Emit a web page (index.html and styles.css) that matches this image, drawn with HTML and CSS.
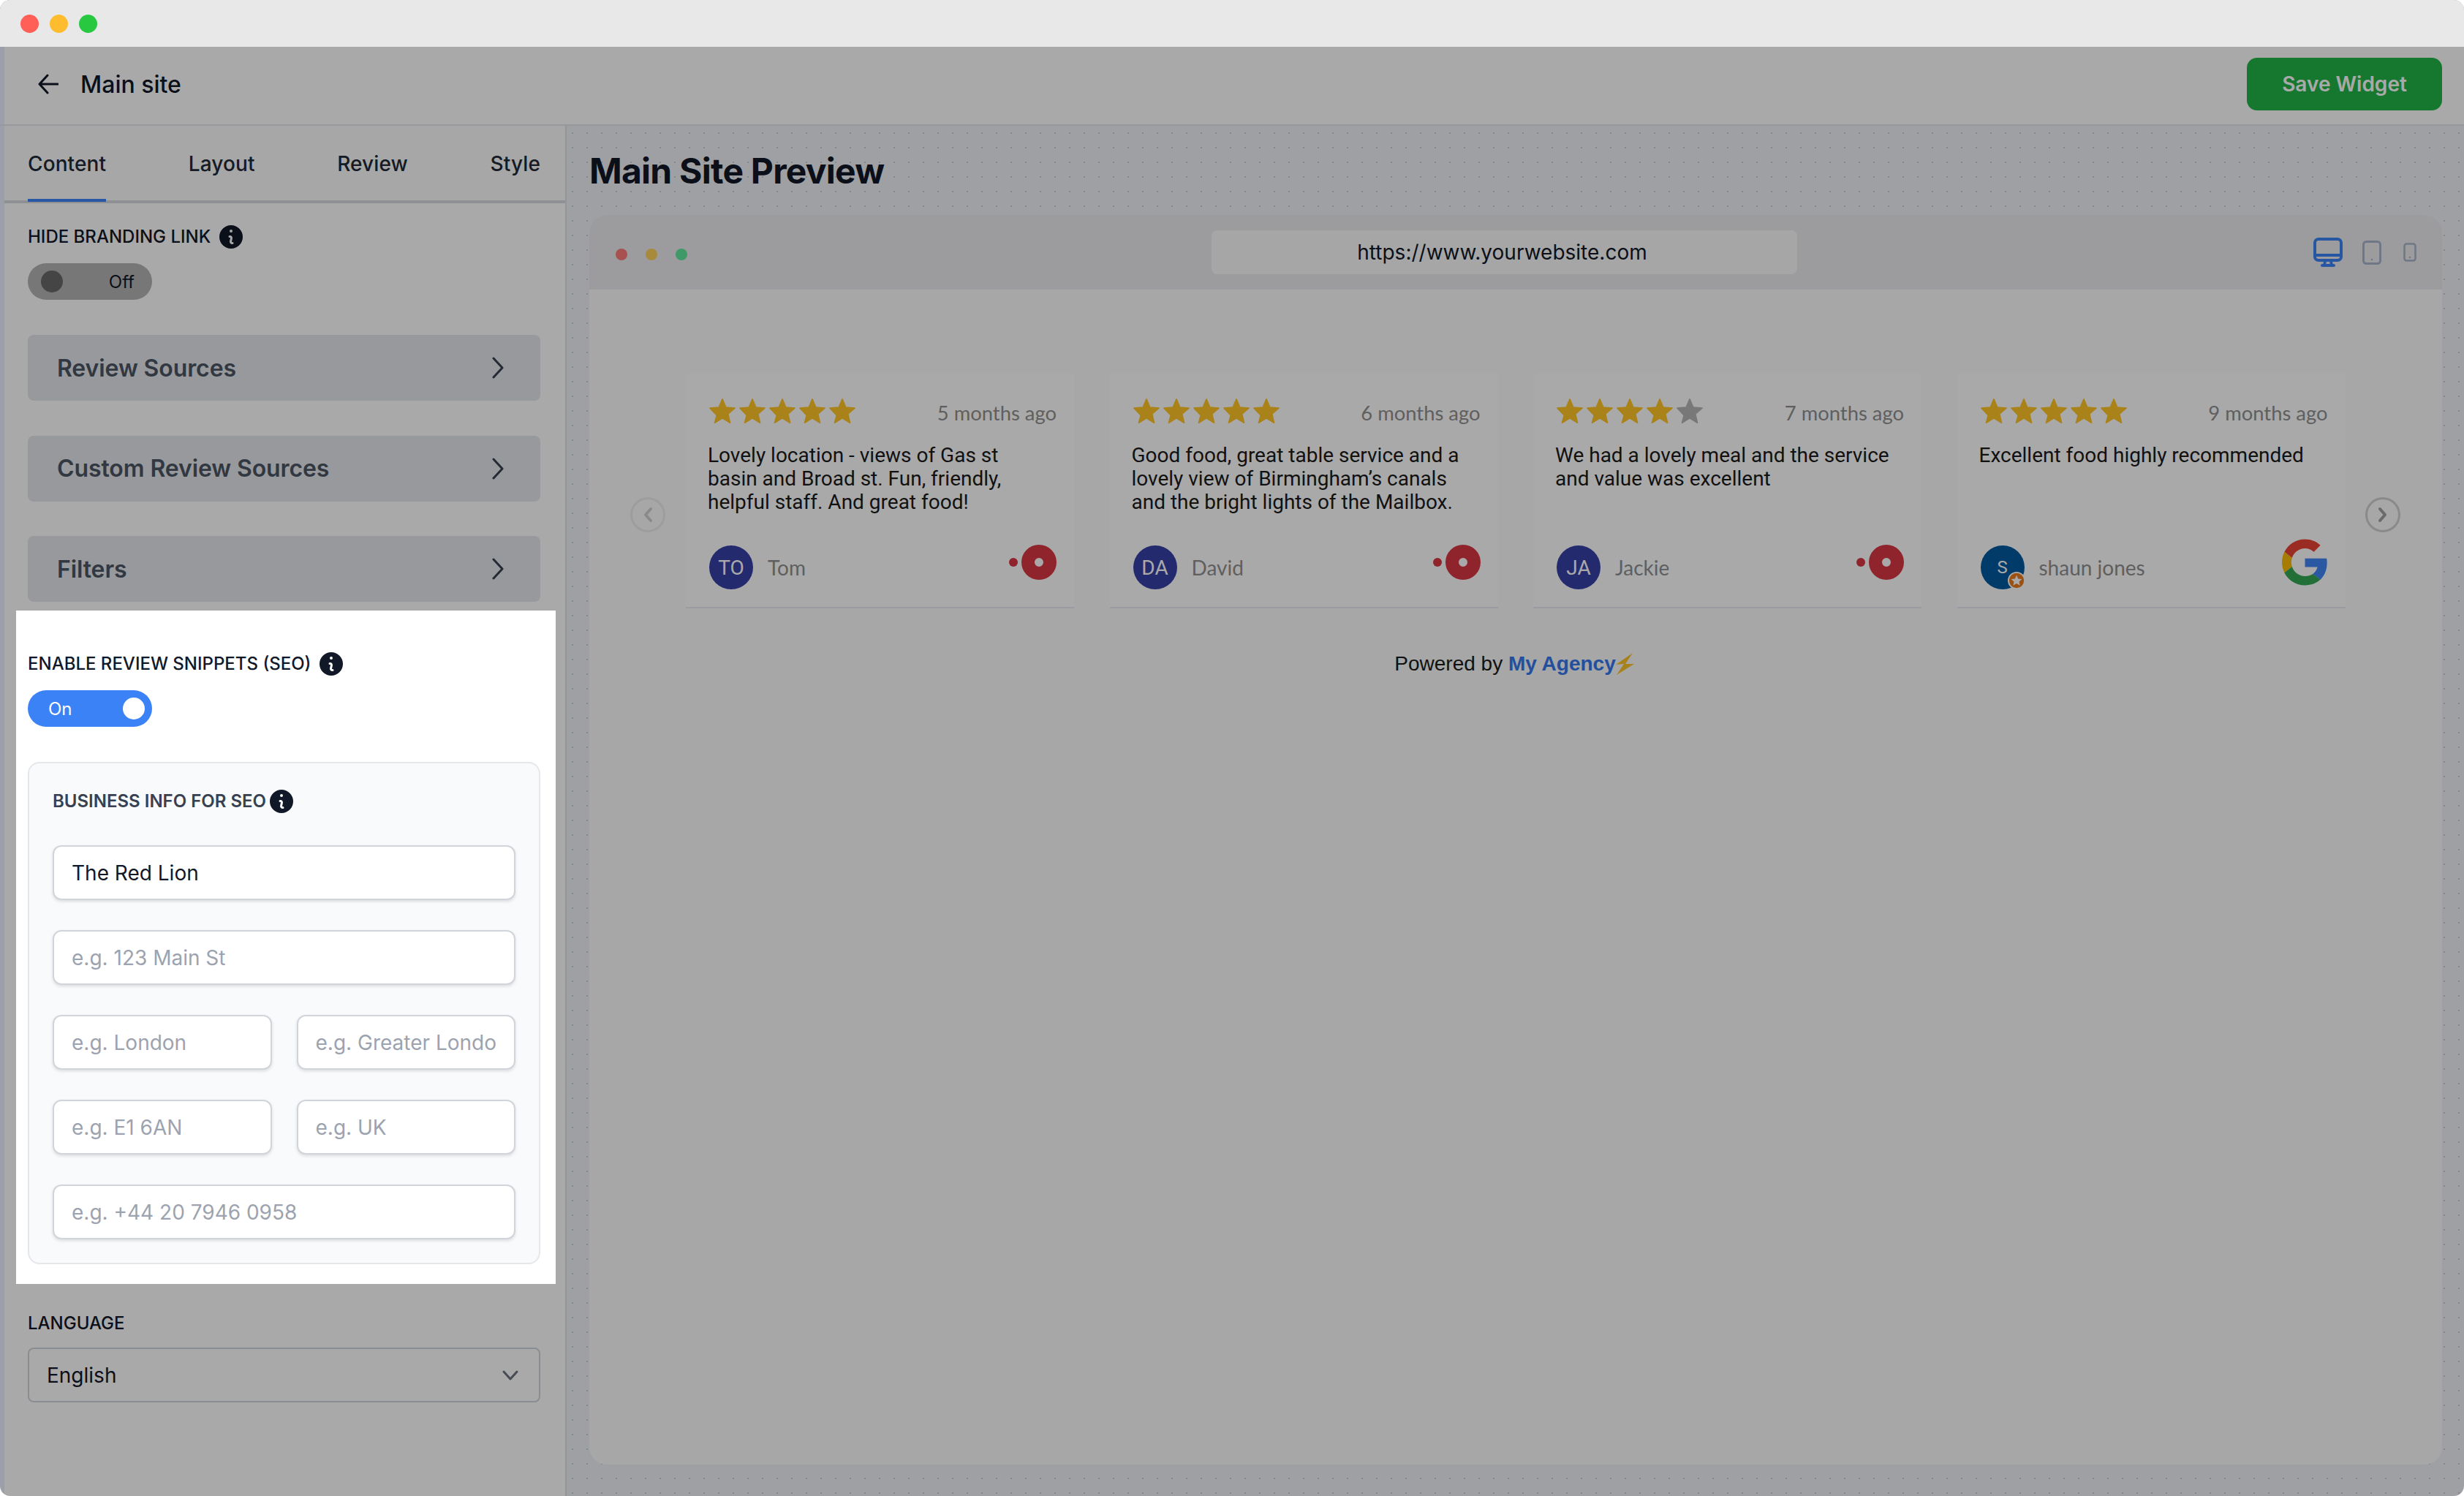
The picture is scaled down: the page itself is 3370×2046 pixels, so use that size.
FILE: index.html
```html
<!DOCTYPE html>
<html lang="en">
<head>
    <meta charset="UTF-8">
    <meta name="viewport" content="width=device-width, initial-scale=1.0">
    <title>Main site</title>
    <link rel="stylesheet" href="styles.css">
</head>
<body>
    <svg class="defs" width="0" height="0">
        <symbol id="star" viewBox="1.5 1.5 21 20"><path d="M12 17.27L18.18 21l-1.64-7.03L22 9.24l-7.19-.61L12 2 9.19 8.63 2 9.24l5.46 5.73L5.82 21z" fill="currentColor" stroke="currentColor" stroke-width="1" stroke-linejoin="round"/></symbol>
        <symbol id="info" viewBox="2 2 16 16"><path fill="currentColor" fill-rule="evenodd" d="M18 10a8 8 0 11-16 0 8 8 0 0116 0zm-7-4a1 1 0 11-2 0 1 1 0 012 0zM9 9a.75.75 0 000 1.5h.253a.25.25 0 01.244.304l-.459 2.066A1.75 1.75 0 0010.747 15H11a.75.75 0 000-1.5h-.253a.25.25 0 01-.244-.304l.459-2.066A1.75 1.75 0 009.253 9H9z"/></symbol>
        <symbol id="opentable" viewBox="0 0 65 48"><circle cx="6" cy="24" r="6" fill="currentColor"/><path fill="currentColor" fill-rule="evenodd" d="M41 0a24 24 0 110 48 24 24 0 010-48zm0 18a6 6 0 100 12 6 6 0 000-12z"/></symbol>
    </svg>

    <div class="window">
        <div class="titlebar">
            <span class="light red"></span>
            <span class="light yellow"></span>
            <span class="light green"></span>
        </div>

        <header class="topbar">
            <svg class="back" width="28" height="28" viewBox="0 0 28 28" fill="none" stroke="currentColor" stroke-width="3" stroke-linecap="round" stroke-linejoin="round"><path d="M13 2L2 14l11 12M2 14h25"/></svg>
            <span class="site-name">Main site</span>
            <button class="save">Save Widget</button>
        </header>

        <div class="workspace">
            <aside class="sidebar">
                <nav class="tabs">
                    <span class="tab active">Content</span>
                    <span class="tab">Layout</span>
                    <span class="tab">Review</span>
                    <span class="tab">Style</span>
                </nav>

                <div class="sidebar-body">
                    <div class="label-row">
                        <span class="label">Hide branding link</span>
                        <svg class="info"><use href="#info"/></svg>
                    </div>
                    <div class="toggle off"><span class="knob"></span><span>Off</span></div>

                    <div class="accordion first">
                        <span>Review Sources</span>
                        <svg width="20" height="30" viewBox="0 0 20 30" fill="none" stroke="currentColor" stroke-width="3" stroke-linecap="round" stroke-linejoin="round"><path d="M4 2l12 13L4 28"/></svg>
                    </div>
                    <div class="accordion">
                        <span>Custom Review Sources</span>
                        <svg width="20" height="30" viewBox="0 0 20 30" fill="none" stroke="currentColor" stroke-width="3" stroke-linecap="round" stroke-linejoin="round"><path d="M4 2l12 13L4 28"/></svg>
                    </div>
                    <div class="accordion">
                        <span>Filters</span>
                        <svg width="20" height="30" viewBox="0 0 20 30" fill="none" stroke="currentColor" stroke-width="3" stroke-linecap="round" stroke-linejoin="round"><path d="M4 2l12 13L4 28"/></svg>
                    </div>

                    <section class="spotlight">
                        <div class="label-row">
                            <span class="label">Enable review snippets (SEO)</span>
                            <svg class="info"><use href="#info"/></svg>
                        </div>
                        <div class="toggle on"><span>On</span><span class="knob"></span></div>

                        <div class="seo-panel">
                            <div class="label-row tight">
                                <span class="label strong">Business info for SEO</span>
                                <svg class="info"><use href="#info"/></svg>
                            </div>
                            <div class="fields">
                                <input class="field wide" type="text" value="The Red Lion">
                                <input class="field wide" type="text" placeholder="e.g. 123 Main St">
                                <input class="field" type="text" placeholder="e.g. London">
                                <input class="field" type="text" placeholder="e.g. Greater London">
                                <input class="field" type="text" placeholder="e.g. E1 6AN">
                                <input class="field" type="text" placeholder="e.g. UK">
                                <input class="field wide" type="text" placeholder="e.g. +44 20 7946 0958">
                            </div>
                        </div>
                    </section>

                    <div class="label language-label">Language</div>
                    <div class="select">
                        <span>English</span>
                        <svg width="22" height="14" viewBox="0 0 22 14" fill="none" stroke="currentColor" stroke-width="3" stroke-linecap="round" stroke-linejoin="round"><path d="M2 2l9 10 9-10"/></svg>
                    </div>
                </div>
            </aside>

            <main class="preview">
                <h1>Main Site Preview</h1>
                <div class="frame">
                    <div class="frame-bar">
                        <div class="frame-dots">
                            <span class="dot red"></span>
                            <span class="dot yellow"></span>
                            <span class="dot green"></span>
                        </div>
                        <div class="url">https://www.yourwebsite.com</div>
                        <div class="devices">
                            <svg class="desktop" width="40" height="40" viewBox="0 0 40 40" fill="none" stroke="currentColor" stroke-width="4" stroke-linejoin="round" stroke-linecap="round"><rect x="2" y="2" width="36" height="29" rx="5"/><path d="M2 24h36M16 32l-1 6M24 32l1 6M12 38h16"/></svg>
                            <svg class="tablet" width="26" height="33" viewBox="0 0 26 33" fill="none" stroke="currentColor" stroke-width="3"><rect x="1.5" y="1.5" width="23" height="30" rx="4"/><circle cx="13" cy="26" r="1.2" fill="currentColor" stroke="none"/></svg>
                            <svg class="phone" width="18" height="26" viewBox="0 0 18 26" fill="none" stroke="currentColor" stroke-width="2.5"><rect x="1.5" y="1.5" width="15" height="23" rx="3"/><circle cx="9" cy="20" r="1.2" fill="currentColor" stroke="none"/></svg>
                        </div>
                    </div>

                    <div class="frame-body">
                        <div class="carousel">
                            <button class="nav prev"><svg width="14" height="22" viewBox="0 0 14 22" fill="none" stroke="currentColor" stroke-width="4" stroke-linecap="round" stroke-linejoin="round"><path d="M11 3l-7 8 7 8"/></svg></button>

                            <article class="card">
                                <div class="card-top">
                                    <div class="stars">
                                        <svg class="star"><use href="#star"/></svg><svg class="star"><use href="#star"/></svg><svg class="star"><use href="#star"/></svg><svg class="star"><use href="#star"/></svg><svg class="star"><use href="#star"/></svg>
                                    </div>
                                    <span class="time">5 months ago</span>
                                </div>
                                <p class="review">Lovely location - views of Gas st basin and Broad st. Fun, friendly, helpful staff. And great food!</p>
                                <div class="card-foot">
                                    <span class="avatar">TO</span>
                                    <span class="author">Tom</span>
                                    <svg class="ot-logo"><use href="#opentable"/></svg>
                                </div>
                            </article>

                            <article class="card">
                                <div class="card-top">
                                    <div class="stars">
                                        <svg class="star"><use href="#star"/></svg><svg class="star"><use href="#star"/></svg><svg class="star"><use href="#star"/></svg><svg class="star"><use href="#star"/></svg><svg class="star"><use href="#star"/></svg>
                                    </div>
                                    <span class="time">6 months ago</span>
                                </div>
                                <p class="review">Good food, great table service and a lovely view of Birmingham’s canals and the bright lights of the Mailbox.</p>
                                <div class="card-foot">
                                    <span class="avatar">DA</span>
                                    <span class="author">David</span>
                                    <svg class="ot-logo"><use href="#opentable"/></svg>
                                </div>
                            </article>

                            <article class="card">
                                <div class="card-top">
                                    <div class="stars">
                                        <svg class="star"><use href="#star"/></svg><svg class="star"><use href="#star"/></svg><svg class="star"><use href="#star"/></svg><svg class="star"><use href="#star"/></svg><svg class="star empty"><use href="#star"/></svg>
                                    </div>
                                    <span class="time">7 months ago</span>
                                </div>
                                <p class="review">We had a lovely meal and the service and value was excellent</p>
                                <div class="card-foot">
                                    <span class="avatar">JA</span>
                                    <span class="author">Jackie</span>
                                    <svg class="ot-logo"><use href="#opentable"/></svg>
                                </div>
                            </article>

                            <article class="card">
                                <div class="card-top">
                                    <div class="stars">
                                        <svg class="star"><use href="#star"/></svg><svg class="star"><use href="#star"/></svg><svg class="star"><use href="#star"/></svg><svg class="star"><use href="#star"/></svg><svg class="star"><use href="#star"/></svg>
                                    </div>
                                    <span class="time">9 months ago</span>
                                </div>
                                <p class="review">Excellent food highly recommended</p>
                                <div class="card-foot">
                                    <span class="avatar guide">S
                                        <svg class="guide-badge" width="24" height="24" viewBox="0 0 26 26"><circle cx="13" cy="13" r="12" fill="#e87a1d" stroke="#fff" stroke-width="2"/><path fill="#fff" d="M13 5l2.3 5.2 5.7.6-4.2 3.8 1.2 5.600-5-2.900-5 2.900 1.200-5.600L5 10.800l5.700-.6z"/></svg>
                                    </span>
                                    <span class="author">shaun jones</span>
                                    <svg class="g-logo" viewBox="0 0 48 48">
                                        <path fill="#EA4335" d="M24 9.5c3.54 0 6.71 1.22 9.21 3.6l6.85-6.85C35.9 2.38 30.47 0 24 0 14.62 0 6.51 5.38 2.56 13.22l7.98 6.19C12.43 13.72 17.74 9.5 24 9.5z"/>
                                        <path fill="#4285F4" d="M46.98 24.55c0-1.57-.15-3.09-.38-4.55H24v9.02h12.94c-.58 2.96-2.26 5.48-4.78 7.18l7.73 6c4.51-4.18 7.09-10.36 7.09-17.65z"/>
                                        <path fill="#FBBC05" d="M10.53 28.59c-.48-1.45-.76-2.99-.76-4.59s.27-3.14.76-4.59l-7.98-6.19C.92 16.46 0 20.12 0 24c0 3.88.92 7.54 2.56 10.78l7.97-6.19z"/>
                                        <path fill="#34A853" d="M24 48c6.48 0 11.93-2.13 15.89-5.81l-7.73-6c-2.15 1.45-4.92 2.3-8.16 2.3-6.26 0-11.57-4.22-13.47-9.91l-7.98 6.19C6.51 42.62 14.62 48 24 48z"/>
                                    </svg>
                                </div>
                            </article>

                            <button class="nav next"><svg width="14" height="22" viewBox="0 0 14 22" fill="none" stroke="currentColor" stroke-width="4" stroke-linecap="round" stroke-linejoin="round"><path d="M3 3l7 8-7 8"/></svg></button>
                        </div>

                        <div class="powered">Powered by <a>My Agency</a><svg width="25" height="30" viewBox="0 0 25 30"><path fill="#fcc32a" d="M23 0L0 16l11-1L1 30l24-15-12 0z"/></svg></div>
                    </div>
                </div>
            </main>
        </div>
    </div>
</body>
</html>
```

FILE: styles.css
```css
* {
    box-sizing: border-box;
}
html, body {
    margin: 0;
    height: 100%;
    background: #fff;
}
body {
    font-family: Inter, "Noto Sans", sans-serif;
    color: #111827;
}
.defs {
    position: absolute;
}

.window {
    height: 2046px;
    display: flex;
    flex-direction: column;
    overflow: hidden;
    border-radius: 14px;
}

/* mac title bar sits above the dim layer */
.titlebar {
    position: relative;
    z-index: 20;
    height: 64px;
    flex: none;
    display: flex;
    align-items: center;
    gap: 15px;
    padding: 0 28px;
    background: #e8e8e8;
}
.light {
    width: 25px;
    height: 25px;
    border-radius: 50%;
}
.light.red { background: #ff5f57; }
.light.yellow { background: #febc2e; }
.light.green { background: #28c840; }

.topbar {
    height: 108px;
    flex: none;
    display: flex;
    align-items: center;
    padding: 0 30px 4px 52px;
    background: #fff;
    border-bottom: 2px solid #e5e7eb;
    box-shadow: inset 6px 0 0 #e8f0ff;
}
.back {
    margin-right: 30px;
    color: #111827;
}
.site-name {
    font-size: 32px;
    font-weight: 500;
}
.save {
    margin-left: auto;
    width: 267px;
    height: 72px;
    border: none;
    border-radius: 14px;
    background: #20b546;
    color: #fff;
    font-family: Inter, sans-serif;
    font-size: 28px;
    font-weight: 600;
}

.workspace {
    flex: 1;
    display: flex;
    min-height: 0;
}

/* sidebar */
.sidebar {
    width: 775px;
    flex: none;
    background: #fff;
    border-left: 6px solid #e8f0ff;
    border-right: 2px solid #dfe1e7;
}
.tabs {
    height: 106px;
    display: flex;
    justify-content: space-between;
    padding: 0 34px 0 32px;
    background: #fafcfb;
    border-bottom: 4px solid #d8dade;
}
.tab {
    height: 104px;
    padding-top: 4px;
    line-height: 96px;
    font-size: 28px;
    font-weight: 500;
    letter-spacing: 0.1px;
    color: #1f2937;
    border-bottom: 4px solid transparent;
}
.tab.active {
    border-bottom-color: #3b82f6;
}
.sidebar-body {
    padding: 30px 34px 0 32px;
}
.label-row {
    display: flex;
    align-items: center;
    gap: 12px;
    height: 32px;
}
.label-row.tight {
    gap: 5px;
}
.label {
    font-size: 24px;
    font-weight: 500;
    line-height: 30px;
    text-transform: uppercase;
    color: #111827;
}
.label.strong {
    color: #374151;
    font-weight: 600;
}
.info {
    width: 32px;
    height: 32px;
    color: #111827;
}

.toggle {
    width: 170px;
    height: 50px;
    margin-top: 20px;
    display: flex;
    align-items: center;
    justify-content: space-between;
    border-radius: 25px;
    font-size: 24px;
}
.knob {
    width: 30px;
    height: 30px;
    border-radius: 50%;
}
.toggle.off {
    padding: 0 24px 0 18px;
    background: #b4b4b4;
}
.toggle.off .knob {
    background: #686868;
}
.toggle.on {
    padding: 0 10px 0 28px;
    background: #3b82f6;
    color: #fff;
}
.toggle.on .knob {
    background: #fff;
}

.accordion {
    height: 90px;
    margin-bottom: 47.5px;
    display: flex;
    align-items: center;
    justify-content: space-between;
    padding: 0 48px 0 40px;
    background: #e5e7eb;
    border-radius: 8px;
    font-size: 32px;
    font-weight: 600;
    letter-spacing: -0.1px;
    color: #4b5563;
}
.accordion svg {
    color: #374151;
}
.accordion.first {
    margin-top: 48px;
}

/* highlighted block, the shadow dims everything else */
.spotlight {
    position: relative;
    z-index: 10;
    margin: -35.5px -21px 0 -16px;
    padding: 57px 21px 27px 16px;
    background: #fff;
    box-shadow: 0 0 0 4000px rgba(0, 0, 0, 0.337);
}
.seo-panel {
    margin-top: 48px;
    padding: 36px 32px 32px;
    background: #f9fafb;
    border: 2px solid #e5e7eb;
    border-radius: 16px;
}
.fields {
    margin-top: 44px;
    display: grid;
    grid-template-columns: 1fr 1fr;
    gap: 41px 34px;
}
.field {
    width: 100%;
    height: 75px;
    padding: 0 24px;
    background: #fff;
    border: 2px solid #d1d5db;
    border-radius: 12px;
    box-shadow: 0 2px 4px rgba(0, 0, 0, 0.12);
    font-family: Inter, sans-serif;
    font-size: 28px;
    color: #111827;
}
.field::placeholder {
    color: #9ca3af;
    opacity: 1;
}
.field.wide {
    grid-column: 1 / 3;
}

.language-label {
    margin-top: 39px;
}
.select {
    height: 75px;
    margin-top: 18px;
    display: flex;
    align-items: center;
    justify-content: space-between;
    padding: 0 28px 0 24px;
    border: 2px solid #d1d5db;
    border-radius: 8px;
    font-size: 28px;
}
.select svg {
    color: #6b7280;
}

/* preview */
.preview {
    flex: 1;
    display: flex;
    flex-direction: column;
    min-width: 0;
    padding: 32px 30px 43px 31px;
    background-color: #f0f2f8;
    background-image: radial-gradient(circle, #cbcfd6 1px, transparent 1.2px);
    background-size: 20px 20px;
    background-position: -2px 0;
}
.preview h1 {
    margin: 0 0 30px;
    font-size: 48px;
    line-height: 60px;
    font-weight: 700;
    letter-spacing: -0.75px;
}
.frame {
    flex: 1;
    display: flex;
    flex-direction: column;
    border-radius: 24px;
    overflow: hidden;
    background: #fafcfb;
}
.frame-bar {
    height: 102px;
    flex: none;
    display: flex;
    align-items: center;
    padding: 0 35px 0 36px;
    background: #ebecf0;
}
.frame-dots {
    display: flex;
    gap: 25px;
    padding-top: 6px;
}
.dot {
    width: 16px;
    height: 16px;
    border-radius: 50%;
}
.dot.red { background: #fc7a7a; }
.dot.yellow { background: #fcd058; }
.dot.green { background: #5fe89d; }
.url {
    width: 801px;
    height: 60px;
    margin-left: 717px;
    padding-right: 6px;
    background: #fafbfb;
    border-radius: 8px;
    text-align: center;
    line-height: 60px;
    font-size: 28px;
}
.devices {
    margin-left: auto;
    display: flex;
    align-items: center;
    color: #a8b3c9;
}
.desktop {
    color: #3b82f6;
    margin-right: 27px;
}
.phone {
    margin-left: 30px;
}

.frame-body {
    padding: 115px 0 0 56px;
}
.carousel {
    display: flex;
    align-items: flex-start;
    gap: 48.5px;
}
.nav {
    width: 48px;
    height: 48px;
    margin-top: 169px;
    padding: 0;
    display: flex;
    align-items: center;
    justify-content: center;
    background: none;
    border: 3px solid #d0d0d0;
    border-radius: 50%;
    color: #a0a0a0;
}
.nav.prev {
    margin-right: -20.5px;
    border-color: #ededed;
    color: #d0d0d0;
}
.nav.next {
    margin-left: -21.5px;
}
.card {
    width: 531px;
    height: 321px;
    flex: none;
    display: flex;
    flex-direction: column;
    padding: 34px 24px 24px 32px;
    background: #fff;
    border-bottom: 2px solid #e8eaf1;
}
.card-top {
    display: flex;
    align-items: flex-start;
    justify-content: space-between;
}
.stars {
    display: flex;
    gap: 5px;
}
.star {
    width: 36px;
    height: 34px;
    color: #ffc426;
}
.star.empty {
    color: #b5b5b5;
}
.time {
    font-family: Lato, sans-serif;
    font-size: 27.4px;
    line-height: 40px;
    color: #909090;
}
.review {
    width: 465px;
    margin: 22px 0 0 -2px;
    font-family: Roboto, sans-serif;
    font-size: 28px;
    line-height: 32px;
    color: #1a1a1a;
}
.card-foot {
    margin-top: auto;
    display: flex;
    align-items: flex-start;
}
.avatar {
    position: relative;
    width: 60px;
    height: 60px;
    flex: none;
    display: flex;
    align-items: center;
    justify-content: center;
    border-radius: 50%;
    background: #3540a6;
    color: #fff;
    font-family: Roboto, sans-serif;
    font-size: 28px;
}
.avatar.guide {
    background: #035aa0;
    font-size: 24px;
}
.guide-badge {
    position: absolute;
    right: -1px;
    bottom: 0;
}
.author {
    margin: 12px 0 0 20px;
    font-family: Lato, sans-serif;
    font-size: 28px;
    line-height: 36px;
    color: #909090;
}
.ot-logo {
    width: 65px;
    height: 48px;
    margin: -1px 0 0 auto;
    color: #da3743;
}
.g-logo {
    width: 63px;
    height: 64px;
    margin: -9px 0 0 auto;
}

.powered {
    margin: 56px 0 0 -60px;
    text-align: center;
    font-family: "Liberation Sans", Arial, sans-serif;
    font-size: 28px;
    line-height: 40px;
    color: #1a1a1a;
}
.powered a {
    font-weight: 700;
    color: #3578ee;
}
.powered svg {
    vertical-align: -6px;
}
```
